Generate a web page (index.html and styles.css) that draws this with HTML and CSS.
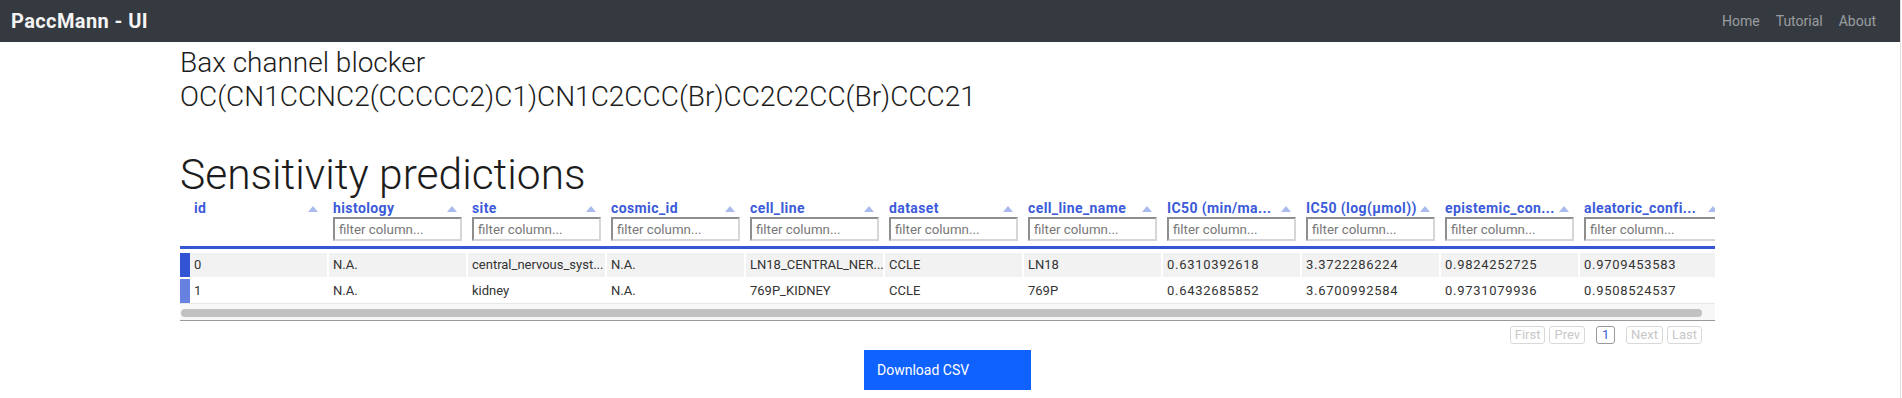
FILE: index.html
```html
<!DOCTYPE html>
<html>
<head>
    <meta charset="UTF-8">
    <title>PaccMann - UI</title>
    <link rel="stylesheet" href="styles.css">
</head>

<body>
<nav class="navbar">
    <a class="brand" href="#">PaccMann - UI</a>
    <ul class="nav-links">
        <li><a href="#">Home</a></li>
        <li><a href="#">Tutorial</a></li>
        <li><a href="#">About</a></li>
    </ul>
</nav>

<main class="content">
    <div class="molecule">
        <p class="mol-name">Bax channel blocker</p>
        <p class="mol-smiles">OC(CN1CCNC2(CCCCC2)C1)CN1C2CCC(Br)CC2C2CC(Br)CCC21</p>
    </div>

    <h2 class="section-title">Sensitivity predictions</h2>

    <div class="table-view">
        <div class="table-scroll">
            <div class="table-grid">
                <div class="head-row">
                    <div class="head-cell first">
                        <div class="head-top"><span class="label">id</span><span class="sort"></span></div>
                    </div>
                    <div class="head-cell">
                        <div class="head-top"><span class="label">histology</span><span class="sort"></span></div>
                        <input class="filter" type="text" placeholder="filter column...">
                    </div>
                    <div class="head-cell">
                        <div class="head-top"><span class="label">site</span><span class="sort"></span></div>
                        <input class="filter" type="text" placeholder="filter column...">
                    </div>
                    <div class="head-cell">
                        <div class="head-top"><span class="label">cosmic_id</span><span class="sort"></span></div>
                        <input class="filter" type="text" placeholder="filter column...">
                    </div>
                    <div class="head-cell">
                        <div class="head-top"><span class="label">cell_line</span><span class="sort"></span></div>
                        <input class="filter" type="text" placeholder="filter column...">
                    </div>
                    <div class="head-cell">
                        <div class="head-top"><span class="label">dataset</span><span class="sort"></span></div>
                        <input class="filter" type="text" placeholder="filter column...">
                    </div>
                    <div class="head-cell">
                        <div class="head-top"><span class="label">cell_line_name</span><span class="sort"></span></div>
                        <input class="filter" type="text" placeholder="filter column...">
                    </div>
                    <div class="head-cell">
                        <div class="head-top"><span class="label">IC50 (min/ma...</span><span class="sort"></span></div>
                        <input class="filter" type="text" placeholder="filter column...">
                    </div>
                    <div class="head-cell">
                        <div class="head-top"><span class="label">IC50 (log(µmol))</span><span class="sort"></span></div>
                        <input class="filter" type="text" placeholder="filter column...">
                    </div>
                    <div class="head-cell">
                        <div class="head-top"><span class="label">epistemic_con...</span><span class="sort"></span></div>
                        <input class="filter" type="text" placeholder="filter column...">
                    </div>
                    <div class="head-cell">
                        <div class="head-top"><span class="label">aleatoric_confi...</span><span class="sort"></span></div>
                        <input class="filter" type="text" placeholder="filter column...">
                    </div>
                </div>

                <div class="body-rows">
                    <div class="row row-even">
                        <div class="cell first">0</div>
                        <div class="cell">N.A.</div>
                        <div class="cell">central_nervous_syst...</div>
                        <div class="cell">N.A.</div>
                        <div class="cell">LN18_CENTRAL_NER...</div>
                        <div class="cell">CCLE</div>
                        <div class="cell">LN18</div>
                        <div class="cell num">0.6310392618</div>
                        <div class="cell num">3.3722286224</div>
                        <div class="cell num">0.9824252725</div>
                        <div class="cell num">0.9709453583</div>
                    </div>
                    <div class="row row-odd">
                        <div class="cell first">1</div>
                        <div class="cell">N.A.</div>
                        <div class="cell">kidney</div>
                        <div class="cell">N.A.</div>
                        <div class="cell">769P_KIDNEY</div>
                        <div class="cell">CCLE</div>
                        <div class="cell">769P</div>
                        <div class="cell num">0.6432685852</div>
                        <div class="cell num">3.6700992584</div>
                        <div class="cell num">0.9731079936</div>
                        <div class="cell num">0.9508524537</div>
                    </div>
                </div>
            </div>
        </div>
        <div class="scroll-track"><div class="scroll-thumb"></div></div>
    </div>

    <div class="pager">
        <button class="page-btn" disabled>First</button>
        <button class="page-btn" disabled>Prev</button>
        <button class="page-btn page-num">1</button>
        <button class="page-btn" disabled>Next</button>
        <button class="page-btn" disabled>Last</button>
    </div>

    <button type="button" class="download-button">Download CSV</button>
</main>
</body>
</html>
```

FILE: styles.css
```css
body {
    margin: 0 1px 0 0;
    padding: 0;
    border-right: 1px solid #dddddd;
    min-height: 398px;
    box-sizing: border-box;
    font-family: Roboto, "Liberation Sans", Arial, sans-serif;
    color: #1c1c1c;
    background-color: #fff;
}

.navbar {
    height: 42px;
    background-color: #343a40;
    display: flex;
    align-items: center;
    justify-content: space-between;
    padding: 0 16px 0 11px;
}

.brand {
    color: #f4f4f4;
    font-size: 20px;
    font-weight: bold;
    letter-spacing: 0.4px;
    text-decoration: none;
}

.nav-links {
    list-style: none;
    margin: 0;
    padding: 0;
    display: flex;
}

.nav-links a {
    display: block;
    padding: 0 8px;
    font-size: 14px;
    color: rgba(255, 255, 255, 0.5);
    text-decoration: none;
}

.content {
    width: 1535px;
    margin-left: 180px;
}

.molecule {
    margin-top: 4px;
}

.molecule p {
    margin: 0;
    font-size: 28px;
    font-weight: 300;
    line-height: 34px;
}

.section-title {
    margin: 36px 0 0;
    font-size: 42.5px;
    font-weight: 300;
    line-height: 50px;
}

/* table */

.table-scroll {
    overflow: hidden;
}

.table-grid {
    width: max-content;
}

.head-row,
.row {
    display: grid;
    grid-template-columns: 147px repeat(9, 137px) 147px;
    column-gap: 2px;
}

.head-row {
    padding: 1px 0 5px;
    border-bottom: 3px solid #3556d3;
}

.head-cell {
    padding: 0 4px;
}

.head-cell.first {
    padding-left: 14px;
}

.head-top {
    display: flex;
    justify-content: space-between;
    align-items: center;
    height: 15px;
    margin-bottom: 1px;
}

.label {
    display: block;
    line-height: 15px;
    white-space: nowrap;
    font-size: 14px;
    font-weight: bold;
    letter-spacing: 0.4px;
    color: #3c5bd8;
}

.sort {
    flex: none;
    width: 0;
    height: 0;
    margin-right: 5px;
    border-left: 5px solid transparent;
    border-right: 5px solid transparent;
    border-bottom: 6px solid #abbaee;
}

.filter {
    display: block;
    box-sizing: border-box;
    width: 100%;
    height: 24px;
    margin: 0;
    padding: 1px 4px;
    border: 2px solid;
    border-color: #8e8e8e #d6d6d6 #d6d6d6 #8e8e8e;
    font-family: Roboto, "Liberation Sans", Arial, sans-serif;
    font-size: 13.3px;
    background-color: #fff;
}

.filter::placeholder {
    color: #777;
}

.body-rows {
    margin-top: 4px;
    display: grid;
    row-gap: 2px;
}

.cell {
    height: 24px;
    line-height: 24px;
    padding: 0 4px;
    font-size: 13px;
    color: #333;
    white-space: nowrap;
    overflow: hidden;
}

.cell.num {
    letter-spacing: 0.7px;
}

.row-even .cell {
    background-color: #f2f2f2;
}

.row-even .cell.first {
    border-left: 10px solid #3253d3;
}

.row-odd .cell.first {
    border-left: 10px solid #6681e0;
}

.scroll-track {
    box-sizing: border-box;
    height: 18px;
    background-color: #f7f7f7;
    border-top: 1px solid #e8e8e8;
    border-bottom: 1px solid #9a9a9a;
}

.scroll-thumb {
    width: 1521px;
    height: 8px;
    margin: 5px 0 0 1px;
    border-radius: 4px;
    background-color: #c1c1c1;
}

/* pagination */

.pager {
    display: flex;
    justify-content: flex-end;
    gap: 4px;
    margin-top: 5px;
    padding-right: 13px;
}

.page-btn {
    height: 18px;
    min-width: 19px;
    padding: 0 4px;
    border: 1px solid #d9d9d9;
    border-radius: 3px;
    background-color: #fff;
    color: #c8c8c8;
    font-family: Roboto, "Liberation Sans", Arial, sans-serif;
    font-size: 13px;
    line-height: 16px;
}

.page-num {
    margin: 0 7px;
    border-color: #9a9a9a;
    color: #3c5bd8;
}

.download-button {
    display: block;
    width: 167px;
    height: 40px;
    margin: 6px auto 0;
    padding: 0 13px;
    border: none;
    background-color: #0f62fe;
    color: #fff;
    text-align: left;
    font-family: Roboto, "Liberation Sans", Arial, sans-serif;
    font-size: 14px;
    cursor: pointer;
}
```
